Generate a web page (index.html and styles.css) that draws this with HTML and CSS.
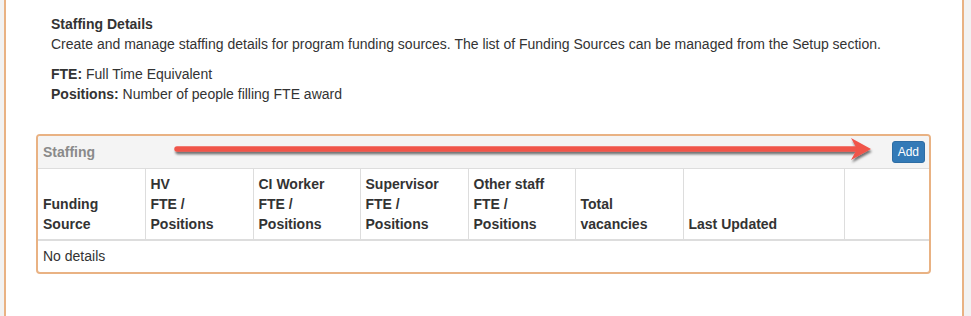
FILE: index.html
```html
<!DOCTYPE html>
<html lang="en">
<head>
    <meta charset="UTF-8">
    <meta name="viewport" content="width=device-width, initial-scale=1.0">
    <link rel="stylesheet" href="styles.css">
</head>
<body>

    <div class="page">
        <div class="intro">
            <p class="intro-lead">
                <strong>Staffing Details</strong><br>
                Create and manage staffing details for program funding sources. The list of Funding Sources can be managed from the Setup section.
            </p>
            <p>
                <strong>FTE:</strong> Full Time Equivalent<br>
                <strong>Positions:</strong> Number of people filling FTE award
            </p>
        </div>

        <div class="panel">
            <div class="panel-heading">
                <span class="panel-title">Staffing</span>
                <button type="button" class="btn-add">Add</button>
            </div>

            <table class="staff-table">
                <colgroup>
                    <col style="width: 107px">
                    <col style="width: 108px">
                    <col style="width: 107px">
                    <col style="width: 108px">
                    <col style="width: 107px">
                    <col style="width: 108px">
                    <col style="width: 161px">
                    <col>
                </colgroup>
                <thead>
                    <tr>
                        <th>Funding<br>Source</th>
                        <th>HV<br>FTE /<br>Positions</th>
                        <th>CI Worker<br>FTE /<br>Positions</th>
                        <th>Supervisor<br>FTE /<br>Positions</th>
                        <th>Other staff<br>FTE /<br>Positions</th>
                        <th>Total<br>vacancies</th>
                        <th>Last Updated</th>
                        <th></th>
                    </tr>
                </thead>
                <tbody>
                    <tr>
                        <td colspan="8">No details</td>
                    </tr>
                </tbody>
            </table>
        </div>

        <!-- red arrow drawn over the screenshot, pointing at the Add button -->
        <svg class="arrow" width="720" height="34" viewBox="0 0 720 34">
            <defs>
                <filter id="arrowShadow" x="-5%" y="-50%" width="110%" height="200%">
                    <feDropShadow dx="1" dy="2.5" stdDeviation="1.2" flood-color="#000" flood-opacity="0.55"/>
                </filter>
            </defs>
            <g filter="url(#arrowShadow)">
                <line x1="6" y1="15" x2="690" y2="15" stroke="#f0544a" stroke-width="5.5" stroke-linecap="round"/>
                <path d="M680 4 L700 15 L680 26 L686 15 Z" fill="#f0544a"/>
            </g>
        </svg>
    </div>

</body>
</html>
```

FILE: styles.css
```css
body {
    margin: 0;
    background-color: #f2f2f2;
    font-family: "Liberation Sans", Arial, sans-serif;
    font-size: 14px;
    line-height: 20px;
    color: #333;
}

.page {
    position: relative;
    margin-left: 4px;
    width: 960px;
    min-height: 316px;
    padding: 14px 31px 0 30px;
    box-sizing: border-box;
    background-color: #ffffff;
    border-left: 2px solid #e9b283;
    border-right: 2px solid #e9b283;
}

.intro {
    padding: 0 15px;
}

.intro p {
    margin: 0 0 10px 0;
}

.intro-lead {
    margin-bottom: 9px;
}

.panel {
    margin-top: 30px;
    border: 2px solid #e9b283;
    border-radius: 4px;
    background-color: #ffffff;
    overflow: hidden;
}

.panel-heading {
    display: flex;
    justify-content: space-between;
    align-items: center;
    padding: 5px 4px 5px 5px;
    background-color: #f4f4f4;
    border-bottom: 1px solid #ddd;
}

.panel-title {
    font-weight: bold;
    color: #8a8a8a;
}

.btn-add {
    font-family: "Liberation Sans", Arial, sans-serif;
    font-size: 12px;
    line-height: 18px;
    padding: 1px 5px;
    color: #ffffff;
    background-color: #337ab7;
    border: 1px solid #2e6da4;
    border-radius: 3px;
    cursor: pointer;
}

.staff-table {
    width: 100%;
    table-layout: fixed;
    border-collapse: collapse;
}

.staff-table th,
.staff-table td {
    padding: 5px 5px;
    text-align: left;
    vertical-align: bottom;
}

.staff-table td {
    padding-bottom: 6px;
}

.staff-table th {
    font-weight: bold;
    border-bottom: 2px solid #ddd;
    border-left: 1px solid #ddd;
}

.staff-table th:first-child {
    border-left: none;
}

.arrow {
    position: absolute;
    left: 165px;
    top: 134px;
    overflow: visible;
}
```
